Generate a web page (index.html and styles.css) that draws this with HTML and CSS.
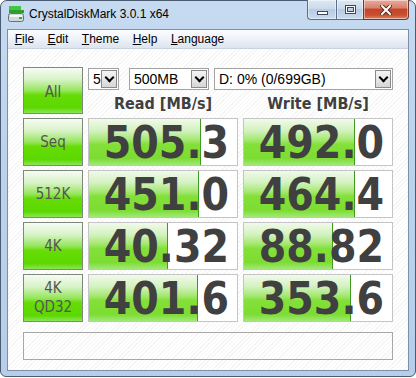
FILE: index.html
```html
<!DOCTYPE html>
<html lang="en">
<head>
    <meta charset="UTF-8">
    <title>CrystalDiskMark 3.0.1 x64</title>
    <link rel="stylesheet" href="styles.css">
</head>
<body>

    <div class="window">
        <!-- Title bar -->
        <div class="titlebar">
            <svg class="app-icon" width="16" height="17" viewBox="0 0 16 17">
                <rect x="1" y="1" width="12" height="4" fill="#44c444"/>
                <rect x="1" y="5" width="15" height="3" fill="#2e9e2e"/>
                <rect x="0.5" y="8.5" width="15" height="8" rx="2" fill="#d4d8dc" stroke="#6a6f75"/>
                <rect x="2" y="10" width="12" height="2" fill="#f2f4f6"/>
                <rect x="11" y="12" width="3" height="2" fill="#22bb22"/>
            </svg>
            <span class="title">CrystalDiskMark 3.0.1 x64</span>
            <div class="caption">
                <div class="cap-btn cap-min"><span class="glyph-min"></span></div>
                <div class="cap-btn cap-max"><span class="glyph-max"></span></div>
                <div class="cap-btn cap-close">
                    <svg width="12" height="10" viewBox="0 0 12 10">
                        <path d="M2 1 L10 9 M10 1 L2 9" stroke="#5a2a20" stroke-width="4" stroke-linecap="square"/>
                        <path d="M2 1 L10 9 M10 1 L2 9" stroke="#ffffff" stroke-width="2" stroke-linecap="square"/>
                    </svg>
                </div>
            </div>
        </div>

        <div class="client">
            <!-- Menu -->
            <div class="menubar">
                <span class="menu-item"><u>F</u>ile</span>
                <span class="menu-item"><u>E</u>dit</span>
                <span class="menu-item"><u>T</u>heme</span>
                <span class="menu-item"><u>H</u>elp</span>
                <span class="menu-item"><u>L</u>anguage</span>
            </div>

            <!-- Benchmark panel -->
            <div class="panel">
                <div class="grid">
                    <div class="btn btn-all">All</div>
                    <div class="head">
                        <div class="combos">
                            <div class="combo combo-count"><span>5</span><i class="arrow"></i></div>
                            <div class="combo combo-size"><span>500MB</span><i class="arrow"></i></div>
                            <div class="combo combo-drive"><span>D: 0% (0/699GB)</span><i class="arrow"></i></div>
                        </div>
                        <div class="labels">
                            <span>Read [MB/s]</span>
                            <span>Write [MB/s]</span>
                        </div>
                    </div>

                    <div class="btn">Seq</div>
                    <div class="cell"><div class="fill" style="width: 111px"></div><span class="val">505.3</span></div>
                    <div class="cell"><div class="fill" style="width: 110px"></div><span class="val">492.0</span></div>

                    <div class="btn">512K</div>
                    <div class="cell"><div class="fill" style="width: 109px"></div><span class="val">451.0</span></div>
                    <div class="cell"><div class="fill" style="width: 110px"></div><span class="val">464.4</span></div>

                    <div class="btn">4K</div>
                    <div class="cell"><div class="fill" style="width: 78px"></div><span class="val">40.32</span></div>
                    <div class="cell"><div class="fill" style="width: 88px"></div><span class="val">88.82</span></div>

                    <div class="btn btn-two">4K<br>QD32</div>
                    <div class="cell"><div class="fill" style="width: 108px"></div><span class="val">401.6</span></div>
                    <div class="cell"><div class="fill" style="width: 106px"></div><span class="val">353.6</span></div>
                </div>

                <div class="status"></div>
            </div>
        </div>
    </div>

</body>
</html>
```

FILE: styles.css
```css
body {
    margin: 0;
    padding: 0;
    background-color: #ffffff;
    font-family: 'Liberation Sans', Arial, sans-serif;
}

.window {
    width: 416px;
    height: 377px;
    box-sizing: border-box;
    border: 1px solid #4b5b70;
    border-radius: 7px 7px 6px 6px;
    padding: 0 6px 5px 6px;
    background: linear-gradient(to bottom, #c6dbf1 0%, #bcd3ec 40%, #b6cee9 100%);
    display: flex;
    flex-direction: column;
}

/* Title bar */
.titlebar {
    height: 28px;
    display: flex;
    align-items: flex-start;
    position: relative;
}

.app-icon {
    margin: 4px 0 0 1px;
}

.title {
    margin: 6px 0 0 5px;
    font-size: 12px;
    color: #000000;
}

.caption {
    margin-left: auto;
    display: flex;
    height: 20px;
    margin-top: -1px;
}

.cap-btn {
    box-sizing: border-box;
    height: 20px;
    border: 1px solid #5b6f8a;
    border-top: none;
    display: flex;
    align-items: center;
    justify-content: center;
    box-shadow: inset 0 0 0 1px rgba(255, 255, 255, 0.45);
}

.cap-min {
    width: 29px;
    border-radius: 0 0 0 4px;
    border-right: none;
    background: linear-gradient(to bottom, #dde8f4 0%, #cbdaeb 45%, #b7cbe2 50%, #c9dbee 100%);
}

.cap-max {
    width: 27px;
    border-right: none;
    background: linear-gradient(to bottom, #dde8f4 0%, #cbdaeb 45%, #b7cbe2 50%, #c9dbee 100%);
}

.cap-close {
    width: 46px;
    border-color: #6b3a33;
    border-radius: 0 0 4px 0;
    background: linear-gradient(to bottom, #e8ab9e 0%, #d98470 40%, #c4452c 50%, #c9502f 80%, #dc8a6c 100%);
}

.glyph-min {
    width: 9px;
    height: 2px;
    margin-top: 6px;
    background: #ffffff;
    border: 1px solid #3c4a5c;
}

.glyph-max {
    width: 7px;
    height: 5px;
    border: 1px solid #ffffff;
    outline: 1px solid #3c4a5c;
    box-shadow: inset 0 0 0 1px #3c4a5c;
}

/* Client area */
.client {
    flex: 1;
    border: 1px solid #7d90a8;
    background-color: #ffffff;
    display: flex;
    flex-direction: column;
}

.menubar {
    height: 18px;
    border-bottom: 1px solid #c9d2de;
    background: linear-gradient(to bottom, #fbfcfe 0%, #eef2f8 50%, #dde4ee 100%);
    display: flex;
    align-items: center;
    font-size: 12px;
    color: #000000;
}

.menu-item {
    padding: 0 6.75px;
    line-height: 18px;
}

.menu-item u {
    text-decoration-thickness: 1px;
    text-underline-offset: 1px;
}

.panel {
    flex: 1;
    padding: 18px 0 0 15px;
    background: repeating-linear-gradient(135deg, #ffffff 0px, #ffffff 2px, #f5f5f5 2px, #f5f5f5 3px);
}

.grid {
    display: grid;
    grid-template-columns: 60px 150px 150px;
    grid-template-rows: 47px repeat(4, 48px);
    column-gap: 5px;
    row-gap: 4px;
}

.btn {
    box-sizing: border-box;
    border: 1px solid #7d8a7a;
    background: linear-gradient(to bottom, #f7fcf4 0%, #d8f3c8 25%, #96e65c 50%, #66dc06 60%, #5cd800 88%, #8ce558 100%);
    display: flex;
    align-items: center;
    justify-content: center;
    text-align: center;
    font-family: 'DejaVu Sans Condensed', 'DejaVu Sans', sans-serif;
    font-size: 15px;
    color: #555555;
}

.btn-all {
    padding-top: 2px;
}

.btn-two {
    line-height: 19px;
}

.head {
    grid-column: 2 / 4;
    display: flex;
    flex-direction: column;
}

.combos {
    display: flex;
    margin-top: 1px;
    height: 22px;
}

.combo {
    box-sizing: border-box;
    height: 22px;
    border: 1px solid #a3a3a3;
    background-color: #ffffff;
    display: flex;
    align-items: center;
    font-size: 14px;
    color: #000000;
}

.combo span {
    flex: 1;
    padding-left: 4px;
}

.combo-count {
    width: 31px;
    margin-right: 10px;
}

.combo-size {
    width: 80px;
    margin-right: 5px;
}

.combo-drive {
    flex: 1;
}

.arrow {
    box-sizing: border-box;
    width: 16px;
    height: 18px;
    margin-right: 1px;
    border: 1px solid #8a8a8a;
    background: linear-gradient(to bottom, #f4f4f4 0%, #e6e6e6 50%, #d6d6d6 100%);
    display: flex;
    align-items: center;
    justify-content: center;
}

.arrow::after {
    content: "";
    width: 5px;
    height: 5px;
    margin-top: -4px;
    border-right: 2px solid #000000;
    border-bottom: 2px solid #000000;
    transform: rotate(45deg);
}

.labels {
    display: grid;
    grid-template-columns: 150px 150px;
    column-gap: 5px;
    margin-top: 5px;
    font-family: 'DejaVu Sans Condensed', 'DejaVu Sans', sans-serif;
    font-weight: bold;
    font-size: 16px;
    line-height: 18px;
    color: #404040;
    text-align: center;
}

.cell {
    position: relative;
    box-sizing: border-box;
    border: 1px solid #c4c4c4;
    background-color: #ffffff;
    text-align: right;
    padding-right: 8px;
}

.fill {
    position: absolute;
    left: 0;
    top: 0;
    bottom: 0;
    border-right: 1px solid #3f9a22;
    background: linear-gradient(to bottom, #f1faec 0%, #d3f2c0 25%, #a6e872 45%, #84e03a 55%, #7cdc30 85%, #a0e878 100%);
}

.val {
    position: relative;
    font-family: 'DejaVu Sans Condensed', 'DejaVu Sans', sans-serif;
    font-weight: bold;
    font-size: 44px;
    line-height: 47px;
    color: #404040;
}

.status {
    box-sizing: border-box;
    width: 370px;
    height: 28px;
    margin-top: 10px;
    border: 1px solid #a8a8a8;
}
```
